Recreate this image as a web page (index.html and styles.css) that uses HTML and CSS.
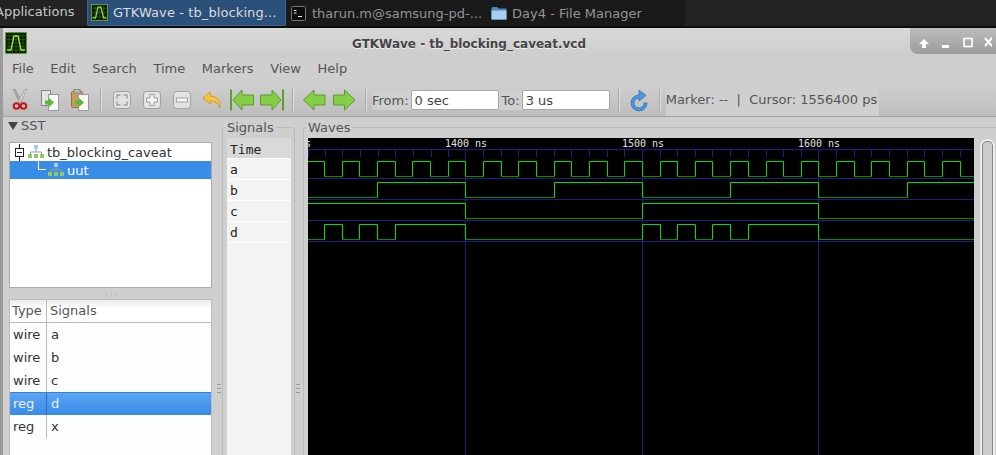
FILE: index.html
```html
<!DOCTYPE html>
<html lang="en">
<head>
    <meta charset="UTF-8">
    <title>GTKWave - tb_blocking_caveat.vcd</title>
    <link rel="stylesheet" href="styles.css">
</head>
<body>

<!-- desktop panel -->
<div class="panel">
    <div class="app-menu">Applications</div>
    <div class="handle-dots"></div>
    <div class="task task-active">
        <svg class="task-icon" width="17" height="17" viewBox="0 0 22 22">
            <rect x="0.5" y="0.5" width="21" height="21" fill="#0b1a05" stroke="#8ab840"/>
            <path d="M0 5.5H22M0 11H22M0 16.5H22M5.5 0V22M11 0V22M16.5 0V22" stroke="#2f6a14" stroke-width="0.8"/>
            <path d="M2 18H6L9 4H13L16 18H20" fill="none" stroke="#9be04a" stroke-width="1.6"/>
        </svg>
        <span>GTKWave - tb_blocking...</span>
    </div>
    <div class="task task-term">
        <svg class="task-icon" width="15" height="15" viewBox="0 0 15 15">
            <rect x="0.5" y="0.5" width="14" height="14" rx="1" fill="#0c0c0c" stroke="#777"/>
            <path d="M3 4.5H5.5M3 7H5.5M7 10.5H11" stroke="#eee" stroke-width="1.2"/>
        </svg>
        <span>tharun.m@samsung-pd-...</span>
    </div>
    <div class="task task-files">
        <svg class="task-icon" width="16" height="14" viewBox="0 0 16 14">
            <path d="M0.5 2.5Q0.5 1 2 1H6L7.5 2.5H15.5V13.5H0.5Z" fill="#4a87c4"/>
            <path d="M0.5 4.5H15.5V13.5H0.5Z" fill="#a5cdf0"/>
        </svg>
        <span>Day4 - File Manager</span>
    </div>
</div>

<div class="window">
    <div class="titlebar">
        <svg class="win-icon" width="22" height="22" viewBox="0 0 22 22">
            <rect x="0.5" y="0.5" width="21" height="21" fill="#0b1a05" stroke="#6d9a32"/>
            <path d="M0 4H22M0 7.500H22M0 11H22M0 14.500H22M0 18H22M4 0V22M7.500 0V22M11 0V22M14.500 0V22M18 0V22" stroke="#2a6412" stroke-width="0.7"/>
            <path d="M2 18H6L9 4H13L16 18H20" fill="none" stroke="#9be04a" stroke-width="1.4"/>
        </svg>
        <div class="win-title">GTKWave - tb_blocking_caveat.vcd</div>
        <div class="win-buttons">
            <svg width="76" height="14" viewBox="0 0 76 14">
                <path d="M3 8L8 3L13 8H10V12H6V8Z" fill="#fff"/>
                <rect x="26" y="9" width="7" height="3" fill="#fff"/>
                <rect x="48" y="2.5" width="8" height="8" fill="none" stroke="#fff" stroke-width="1.6"/>
                <path d="M69 2L76 10M76 2L69 10" stroke="#fff" stroke-width="2"/>
            </svg>
        </div>
    </div>

    <div class="menubar">
        <span>File</span><span>Edit</span><span>Search</span><span>Time</span><span>Markers</span><span>View</span><span>Help</span>
    </div>

    <div class="toolbar">
        <!-- cut -->
        <svg class="tool" viewBox="0 0 24 24">
            <path d="M5 1L7.500 1.500L14 14L11.500 15Z" fill="#a8a8a8" stroke="#8a8a8a" stroke-width="0.500"/>
            <path d="M19 1L16.500 1.500L10 14L12.500 15Z" fill="#d0d0d0" stroke="#8a8a8a" stroke-width="0.500"/>
            <circle cx="8.500" cy="18" r="2.800" fill="none" stroke="#c8171c" stroke-width="2"/>
            <circle cx="15.500" cy="18" r="2.800" fill="none" stroke="#c8171c" stroke-width="2"/>
        </svg>
        <!-- copy -->
        <svg class="tool" viewBox="0 0 24 24">
            <rect x="3.500" y="2.500" width="9" height="15" fill="#e4e4e4" stroke="#888"/>
            <rect x="10.500" y="6.500" width="10" height="16" fill="#fafafa" stroke="#999"/>
            <path d="M7 12.500H11V10L16 14.500L11 19V16.500H7Z" fill="#5cb82e"/>
        </svg>
        <!-- paste -->
        <svg class="tool" viewBox="0 0 24 24">
            <rect x="3.500" y="3.500" width="11" height="16" rx="1" fill="#c89a5e" stroke="#9a7238"/>
            <rect x="6" y="1.500" width="6" height="3.500" fill="#bbb" stroke="#888"/>
            <rect x="10.500" y="6.500" width="10" height="16" fill="#fafafa" stroke="#999"/>
            <path d="M7 12.500H11V10L16 14.500L11 19V16.500H7Z" fill="#5cb82e"/>
        </svg>
        <div class="sep"></div>
        <!-- zoom fit -->
        <svg class="tool" viewBox="0 0 24 24">
            <rect x="3.500" y="3.500" width="17" height="17" rx="3" fill="#e2e2e2" stroke="#a0a0a0"/>
            <path d="M7 10.500V7H10.500M13.500 7H17V10.500M17 13.500V17H13.500M10.500 17H7V13.500" fill="none" stroke="#a0a0a0" stroke-width="1.500"/>
        </svg>
        <!-- zoom in -->
        <svg class="tool" viewBox="0 0 24 24">
            <rect x="3.500" y="3.500" width="17" height="17" rx="3" fill="#e2e2e2" stroke="#a0a0a0"/>
            <path d="M10 6.500H14V10H17.500V14H14V17.500H10V14H6.500V10H10Z" fill="#f4f4f4" stroke="#a0a0a0"/>
        </svg>
        <!-- zoom out -->
        <svg class="tool" viewBox="0 0 24 24">
            <rect x="3.500" y="3.500" width="17" height="17" rx="3" fill="#e2e2e2" stroke="#a0a0a0"/>
            <rect x="6.500" y="10" width="11" height="4" fill="#f4f4f4" stroke="#a0a0a0"/>
        </svg>
        <!-- undo -->
        <svg class="tool tool-undo" viewBox="0 0 24 24">
            <path d="M4 10L11 4V8C17 8 22 12 21 20C19 15 16 13 11 13V16Z" fill="#f6c445" stroke="#d69c28"/>
        </svg>
        <!-- first -->
        <svg class="tool" viewBox="0 0 24 24">
            <rect x="0" y="1.500" width="2" height="21" fill="#5ca02c"/>
            <path d="M3 12L12 2V7H23.500V17H12V22Z" fill="#84cf45" stroke="#5a9a2c"/>
        </svg>
        <!-- last -->
        <svg class="tool" viewBox="0 0 24 24">
            <rect x="22" y="1.500" width="2" height="21" fill="#5ca02c"/>
            <path d="M21 12L12 2V7H0.500V17H12V22Z" fill="#84cf45" stroke="#5a9a2c"/>
        </svg>
        <div class="sep"></div>
        <!-- left -->
        <svg class="tool tool-left" viewBox="0 0 24 24">
            <path d="M0.500 12L11 2V7H22V17H11V22Z" fill="#84cf45" stroke="#5a9a2c"/>
        </svg>
        <!-- right -->
        <svg class="tool" viewBox="0 0 24 24">
            <path d="M22 12L11.500 2V7H0.500V17H11.500V22Z" fill="#84cf45" stroke="#5a9a2c"/>
        </svg>
        <div class="sep"></div>
        <div class="range">
            <label for="from">From:</label>
            <input type="text" id="from" value="0 sec">
            <label class="label-to" for="to">To:</label>
            <input type="text" id="to" value="3 us">
        </div>
        <div class="sep sep-reload"></div>
        <!-- reload -->
        <svg class="reload" width="22" height="24" viewBox="0 0 22 24">
            <path d="M11 7A8 8 0 1 0 19 15H16A5 5 0 1 1 11 10V13L18 7.500L11 2Z" fill="#4a96e0" stroke="#2a6cb4" stroke-width="0.700"/>
        </svg>
        <div class="sep sep-status"></div>
        <div class="status">Marker: --&nbsp; |&nbsp; Cursor: 1556400 ps</div>
    </div>

    <div class="main">
        <div class="left-pane">
            <div class="sst-label"><span class="arrow-down"></span>SST</div>
            <div class="tree">
                <div class="tree-row">
                    <svg class="expander" width="11" height="17" viewBox="0 0 11 17">
                        <path d="M5.500 0V4M5.500 13V17" stroke="#222"/>
                        <rect x="1.500" y="4.500" width="8" height="8" fill="#fff" stroke="#222"/>
                        <path d="M3 8.500H8" stroke="#222"/>
                    </svg>
                    <svg class="hier" width="16" height="14" viewBox="0 0 16 14">
                        <use href="#hier-icon"/>
                    </svg>
                    tb_blocking_caveat
                </div>
                <div class="tree-row tree-sel">
                    <span class="tree-line"></span>
                    <svg class="hier" width="16" height="14" viewBox="0 0 16 14">
                        <use href="#hier-icon"/>
                    </svg>
                    uut
                </div>
            </div>
            <div class="v-handle">&#8942;&#8942;&#8942;</div>
            <div class="signal-list">
                <div class="list-head">
                    <div class="col-type">Type</div>
                    <div class="col-name">Signals</div>
                </div>
                <div class="list-row"><div class="col-type">wire</div><div class="col-name">a</div></div>
                <div class="list-row"><div class="col-type">wire</div><div class="col-name">b</div></div>
                <div class="list-row"><div class="col-type">wire</div><div class="col-name">c</div></div>
                <div class="list-row list-sel"><div class="col-type">reg</div><div class="col-name">d</div></div>
                <div class="list-row"><div class="col-type">reg</div><div class="col-name">x</div></div>
            </div>
        </div>

        <div class="grip grip-left"></div>

        <fieldset class="frame frame-signals">
            <legend>Signals</legend>
            <div class="sig-names">
                <div class="sig-row sig-time">Time</div>
                <div class="sig-row">a</div>
                <div class="sig-row">b</div>
                <div class="sig-row">c</div>
                <div class="sig-row">d</div>
            </div>
        </fieldset>

        <div class="grip"></div>

        <fieldset class="frame frame-waves">
            <legend>Waves</legend>
            <div class="waves-inner">
                <svg class="wave-canvas" width="666" height="317" viewBox="308 138 666 317">
                    <rect x="308" y="138" width="666" height="317" fill="#000"/>
                    <g class="ruler-text">
                        <text x="269" y="147">1300 ns</text>
                        <text x="445" y="147">1400 ns</text>
                        <text x="622" y="147">1500 ns</text>
                        <text x="798" y="147">1600 ns</text>
                    </g>
                    <path class="grid" d="M308 149.500H974M308 178.500H974M308 199.500H974M308 220.500H974M308 241.500H974M465.500 149.500V455M642.500 149.500V455M818.500 149.500V455"/>
                    <path class="grid" d="M308.500 150V157M325.500 150V157M342.500 150V157M360.500 150V157M378.500 150V157M395.500 150V157M413.500 150V157M431.500 150V157M448.500 150V157M483.500 150V157M501.500 150V157M518.500 150V157M536.500 150V157M554.500 150V157M571.500 150V157M589.500 150V157M607.500 150V157M624.500 150V157M660.500 150V157M677.500 150V157M695.500 150V157M712.500 150V157M730.500 150V157M748.500 150V157M766.500 150V157M783.500 150V157M801.500 150V157M836.500 150V157M854.500 150V157M871.500 150V157M889.500 150V157M907.500 150V157M924.500 150V157M942.500 150V157M960.500 150V157"/>
                    <!-- low levels -->
                    <path class="low" d="M324.500 176.500H342.500M359.500 176.500H377.500M395.500 176.500H412.500M430.500 176.500H448.500M465.500 176.500H483.500M501.500 176.500H518.500M536.500 176.500H554.500M571.500 176.500H589.500M607.500 176.500H624.500M642.500 176.500H660.500M677.500 176.500H695.500M712.500 176.500H730.500M748.500 176.500H766.500M783.500 176.500H801.500M818.500 176.500H836.500M854.500 176.500H871.500M889.500 176.500H907.500M924.500 176.500H942.500M960.500 176.500H974"/>
                    <path class="low" d="M308 197.500H377.500M465.500 197.500H554.500M642.500 197.500H730.500M818.500 197.500H907.500"/>
                    <path class="low" d="M465.500 218.500H642.500M818.500 218.500H974"/>
                    <path class="low" d="M308 239.500H324.500M342.500 239.500H359.500M377.500 239.500H395.500M465.500 239.500H642.500M660.500 239.500H677.500M695.500 239.500H712.500M730.500 239.500H748.500M818.500 239.500H974"/>
                    <!-- high levels and edges -->
                    <path class="high" d="M308 161.500H324.500V176.500M342.500 176.500V161.500H359.500V176.500M377.500 176.500V161.500H395.500V176.500M412.500 176.500V161.500H430.500V176.500M448.500 176.500V161.500H465.500V176.500M483.500 176.500V161.500H501.500V176.500M518.500 176.500V161.500H536.500V176.500M554.500 176.500V161.500H571.500V176.500M589.500 176.500V161.500H607.500V176.500M624.500 176.500V161.500H642.500V176.500M660.500 176.500V161.500H677.500V176.500M695.500 176.500V161.500H712.500V176.500M730.500 176.500V161.500H748.500V176.500M766.500 176.500V161.500H783.500V176.500M801.500 176.500V161.500H818.500V176.500M836.500 176.500V161.500H854.500V176.500M871.500 176.500V161.500H889.500V176.500M907.500 176.500V161.500H924.500V176.500M942.500 176.500V161.500H960.500V176.500"/>
                    <path class="high" d="M377.500 197.500V182.500H465.500V197.500M554.500 197.500V182.500H642.500V197.500M730.500 197.500V182.500H818.500V197.500M907.500 197.500V182.500H974"/>
                    <path class="high" d="M308 203.500H465.500V218.500M642.500 218.500V203.500H818.500V218.500"/>
                    <path class="high" d="M324.500 239.500V224.500H342.500V239.500M359.500 239.500V224.500H377.500V239.500M395.500 239.500V224.500H465.500V239.500M642.500 239.500V224.500H660.500V239.500M677.500 239.500V224.500H695.500V239.500M712.500 239.500V224.500H730.500V239.500M748.500 239.500V224.500H818.500V239.500"/>
                </svg>
                <div class="scrollbar"><div class="scroll-thumb"></div></div>
            </div>
        </fieldset>
    </div>
</div>

<!-- shared icon for the hierarchy tree -->
<svg class="defs" width="0" height="0">
    <symbol id="hier-icon" viewBox="0 0 16 14">
        <rect x="6" y="0" width="4" height="4" fill="#a9c8ee"/>
        <path d="M8 4V7M2.500 9V7H13.500V9" fill="none" stroke="#999"/>
        <rect x="0" y="9" width="4" height="4" fill="#8ccb62"/>
        <rect x="6" y="9" width="4" height="4" fill="#8ccb62"/>
        <rect x="12" y="9" width="4" height="4" fill="#8ccb62"/>
    </symbol>
</svg>

</body>
</html>
```

FILE: styles.css
```css
* {
    box-sizing: border-box;
}
html, body {
    margin: 0;
    padding: 0;
    height: 455px;
    overflow: hidden;
}
body {
    font-family: "DejaVu Sans", sans-serif;
    font-size: 13px;
    background: #cfcfcf;
    color: #555;
}

/* desktop panel */
.panel {
    display: flex;
    height: 28px;
    background: #232323;
    border-bottom: 2px solid #0c0c0c;
    color: #bbb;
    line-height: 23px;
}
.app-menu {
    margin-left: -5px;
    width: 80px;
    flex: none;
    color: #c8c8c8;
}
.handle-dots {
    width: 12px;
}
.task {
    display: flex;
    align-items: center;
    height: 26px;
    flex: none;
}
.task-icon {
    flex: none;
}
.task-active {
    width: 199px;
    padding-left: 3px;
    gap: 5px;
    background: #2b5079;
    border: 1px solid #3b6690;
    border-top: none;
    border-radius: 0 0 2px 2px;
    color: #dcdcdc;
}
.task-active span {
    letter-spacing: 0.1px;
}
.task-term {
    width: 200px;
    padding-left: 5px;
    gap: 6px;
    background: #191919;
    color: #949494;
}
.task-files {
    width: 199px;
    padding-left: 5px;
    gap: 5px;
    background: #191919;
    color: #949494;
}

/* window */
.window {
    height: 427px;
    display: flex;
    flex-direction: column;
    border-left: 3px solid #9b9b9b;
}
.titlebar {
    display: flex;
    align-items: flex-start;
    height: 29px;
    flex: none;
    background: linear-gradient(#d8d8d8, #cdcdcd);
}
.win-icon {
    margin: 4px 0 0 2px;
    flex: none;
}
.win-title {
    margin: 9px 0 0 325px;
    font-size: 12px;
    font-weight: bold;
    color: #444;
    line-height: 14px;
    text-shadow: 0 1px 0 #eee;
}
.win-buttons {
    margin-left: auto;
    width: 86px;
    height: 26px;
    padding: 8px 0 0 6px;
    overflow: hidden;
    background: linear-gradient(#bdbdbd, #9c9c9c);
    border-radius: 0 0 0 8px;
}
.menubar {
    display: flex;
    gap: 16.6px;
    height: 27px;
    flex: none;
    padding: 3px 0 0 9px;
    line-height: 17px;
    background: #cfcfcf;
}
.toolbar {
    display: flex;
    align-items: center;
    gap: 6px;
    height: 33px;
    flex: none;
    padding-left: 5px;
    background: linear-gradient(#cfcfcf, #bdbdbd);
    border-bottom: 1px solid #a3a3a3;
}
.tool {
    width: 24px;
    height: 24px;
    flex: none;
}
.tool-undo {
    margin: 0 1px 0 -1px;
}
.tool-left {
    margin-left: 1px;
}
.sep {
    width: 1px;
    height: 24px;
    margin: 0 3px 0 2px;
    background: #aaa;
    box-shadow: 1px 0 0 #ddd;
    flex: none;
}
.range {
    display: flex;
    flex: none;
    align-items: center;
    gap: 2px;
    margin-left: -3px;
    background: #cfcfcf;
}
.range input {
    flex: none;
    width: 88px;
    height: 20px;
    padding: 0 3px;
    font: 13px "DejaVu Sans", sans-serif;
    color: #444;
    background: #fff;
    border: 1px solid #a8a8a8;
    border-radius: 2px;
}
.label-to {
    margin: 0 0 0 1px;
}
.sep-reload {
    margin-left: 2px;
}
.reload {
    flex: none;
}
.sep-status {
    margin: 0 0 0 3px;
}
.status {
    flex: none;
    align-self: stretch;
    width: 213px;
    line-height: 32px;
    white-space: nowrap;
    background: #cfcfcf;
}

/* panes */
.main {
    display: flex;
    flex: 1;
    min-height: 0;
}
.left-pane {
    width: 209px;
    flex: none;
    padding-left: 6px;
    display: flex;
    flex-direction: column;
}
.sst-label {
    display: flex;
    align-items: center;
    height: 25px;
    padding-bottom: 8px;
    color: #555;
}
.arrow-down {
    width: 0;
    height: 0;
    margin: 0 3px 0 -1px;
    border-left: 5px solid transparent;
    border-right: 5px solid transparent;
    border-top: 8px solid #444;
}
.tree {
    height: 146px;
    flex: none;
    background: #fff;
    border: 1px solid #a9a9a9;
    color: #333;
}
.tree-row {
    display: flex;
    align-items: center;
    height: 18px;
    padding-left: 4px;
    gap: 3px;
}
.expander {
    flex: none;
}
.hier {
    flex: none;
}
.tree-sel {
    position: relative;
    height: 18px;
    padding-left: 38px;
    background: #3a8de6;
    color: #fff;
}
.tree-line {
    position: absolute;
    left: 28px;
    top: 0;
    width: 8px;
    height: 9px;
    border-left: 1px solid #fff;
    border-bottom: 1px solid #fff;
}
.v-handle {
    height: 11px;
    text-align: center;
    font-size: 6px;
    line-height: 11px;
    color: #8a8a8a;
    letter-spacing: -1px;
    flex: none;
}
.signal-list {
    flex: 1;
    background: #fdfdfd;
    border: 1px solid #bdbdbd;
    border-bottom: none;
    color: #333;
}
.list-head {
    display: flex;
    height: 23px;
    line-height: 22px;
    background: linear-gradient(#ebebeb, #fff 40%);
    border-bottom: 1px solid #bbb;
    color: #555;
}
.list-row {
    display: flex;
    height: 23px;
    line-height: 23px;
}
.col-type {
    width: 37px;
    padding-left: 2px;
    border-right: 1px solid #bbb;
    flex: none;
}
.list-row .col-type {
    padding-left: 3px;
}
.col-name {
    padding-left: 3px;
}
.list-row .col-name {
    padding-left: 4px;
}
.list-sel {
    line-height: 21px;
    background: linear-gradient(#5aa5f5, #3a8ae4);
    border-top: 1px solid #3a80d0;
    color: #e8f2ff;
}
.list-sel .col-type {
    border-right-color: #3470b8;
}
.grip {
    width: 8px;
    flex: none;
    position: relative;
}
.grip-left {
    width: 10px;
}
.grip::after {
    content: "";
    position: absolute;
    left: 1px;
    top: 267px;
    width: 4px;
    height: 7px;
    border-top: 1px solid #999;
    border-bottom: 1px solid #999;
    background: linear-gradient(#cfcfcf 40%, #999 40%, #999 60%, #cfcfcf 60%);
}
.grip-left::after {
    left: 5px;
}

/* framed panes */
.frame {
    margin: 0;
    padding: 0;
    border: 1px solid #bcbcbc;
    border-bottom: none;
    border-radius: 3px 3px 0 0;
    min-width: 0;
    position: relative;
    top: 3px;
}
.frame legend {
    margin-left: -2px;
    padding: 0 2px;
    font-size: 13px;
    line-height: 15px;
    color: #555;
}
.frame-signals {
    width: 73px;
    flex: none;
    padding: 3px 3px 0 4px;
}
.sig-names {
    height: 330px;
    background: #f3f3f3;
    font-family: "DejaVu Sans Mono", monospace;
    font-size: 13px;
    color: #222;
}
.sig-row {
    height: 21px;
    line-height: 22px;
    padding-left: 3px;
    border-bottom: 1px solid #fff;
}
.sig-time {
    height: 21px;
    line-height: 24px;
    background: #d9d9d9;
}
.frame-waves {
    flex: 1;
    border-right: none;
    border-radius: 3px 0 0 0;
    padding: 3px 0 0 4px;
}
.waves-inner {
    display: flex;
}
.wave-canvas {
    display: block;
    flex: none;
}
.ruler-text text {
    font-family: "DejaVu Sans Mono", monospace;
    font-size: 10px;
    fill: #e0e0e0;
}
.grid {
    stroke: #1d1d85;
    stroke-width: 1;
    fill: none;
}
.low {
    stroke: #009000;
    stroke-width: 1;
    fill: none;
}
.high {
    stroke: #00e000;
    stroke-width: 1;
    fill: none;
}
.scrollbar {
    flex: none;
    width: 15px;
    margin: 1px 0 0 6px;
    height: 320px;
    padding: 0 2px;
    background: #ededed;
    border-radius: 7px 7px 0 0;
}
.scroll-thumb {
    height: 100%;
    background: #cbcbcb;
    border: 1px solid #888;
    border-bottom: none;
    border-radius: 5px 5px 0 0;
    margin-top: 2px;
}
.defs {
    position: absolute;
}
```
